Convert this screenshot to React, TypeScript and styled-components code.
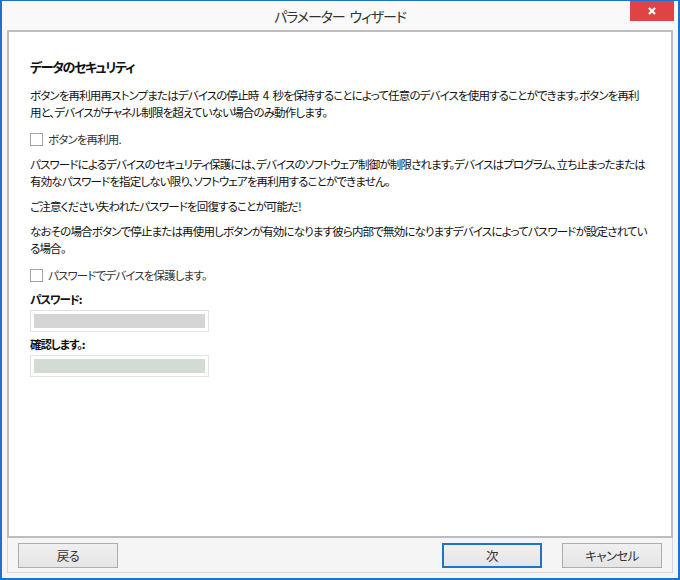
import { FC } from 'react';
import styled, { createGlobalStyle } from 'styled-components';

const GlobalStyle = createGlobalStyle`
  html, body {
    margin: 0;
    padding: 0;
    background: #ffffff;
  }
  * {
    box-sizing: border-box;
  }
`;

const Window = styled.div`
  width: 680px;
  height: 580px;
  display: flex;
  flex-direction: column;
  background-color: #f5f5f5;
  border: 2px solid #1c73c9;
  border-top-width: 1px;
  font-family: 'Noto Sans CJK JP', 'Noto Sans', sans-serif;
  font-feature-settings: 'palt' 1;
  color: #111;
`;

const TitleBar = styled.div`
  position: relative;
  height: 29px;
  display: flex;
  align-items: center;
  justify-content: center;
  background-color: #f9f9f9;
`;

const Title = styled.div`
  font-size: 14px;
  color: #333;
  letter-spacing: -1.1px;
  word-spacing: 3px;
`;

const CloseButton = styled.div`
  position: absolute;
  top: 0;
  right: 4px;
  width: 44px;
  height: 20px;
  display: flex;
  align-items: center;
  justify-content: center;
  background-color: #e04343;
`;

const Body = styled.div`
  flex: 1;
  padding: 0 5px 5px;
  display: flex;
  flex-direction: column;
`;

const Frame = styled.div`
  flex: 1;
  display: flex;
  flex-direction: column;
  border: 1px solid #d6d6d6;
  border-top: none;
`;

const Panel = styled.div`
  flex: 1;
  margin: 0 -1px;
  border: 2px solid #bdbdbd;
  background-color: #ffffff;
  padding: 26px 21px 0;
  display: flex;
  flex-direction: column;
  align-items: flex-start;
`;

const Heading = styled.div`
  font-size: 13px;
  font-weight: 700;
  line-height: 17px;
  letter-spacing: -1.4px;
`;

type TextProps = {
  gap?: number;
};
const Paragraph = styled.div<TextProps>`
  margin-top: ${({ gap }) => gap ?? 8}px;
  font-size: 11.5px;
  line-height: 17px;
  letter-spacing: -0.85px;
  word-spacing: 2.5px;
  white-space: nowrap;
`;

const CheckRow = styled.label<TextProps>`
  margin-top: ${({ gap }) => gap ?? 10}px;
  display: flex;
  align-items: center;
  gap: 5px;
  font-size: 11.5px;
  line-height: 17px;
  letter-spacing: -0.85px;
  color: #333;
`;

const Box = styled.span`
  width: 13px;
  height: 13px;
  border: 1px solid #a3a3a3;
  background-color: #fff;
`;

const FieldLabel = styled.div<TextProps>`
  margin-top: ${({ gap }) => gap ?? 7}px;
  font-size: 11.5px;
  font-weight: 700;
  line-height: 17px;
  letter-spacing: -1.1px;
`;

type FieldProps = {
  fill: string;
};
const Field = styled.div<FieldProps>`
  margin-top: 2px;
  width: 179px;
  height: 22px;
  padding: 3px;
  border: 1px solid #e3e3e3;
  background-color: #fff;

  &::after {
    display: block;
    height: 100%;
    background-color: ${({ fill }) => fill};
    content: '';
  }
`;

const Footer = styled.div`
  display: flex;
  align-items: center;
  padding: 5px 10px 4px;
`;

const Spacer = styled.div`
  flex: 1;
`;

type ButtonProps = {
  primary?: boolean;
};
const Button = styled.button<ButtonProps>`
  width: 100px;
  height: 25px;
  margin-left: ${({ primary }) => (primary ? 0 : 20)}px;
  border: ${({ primary }) => (primary ? '2px solid #1f74c8' : '1px solid #adadad')};
  background: linear-gradient(#f0f0f0, #e5e5e5);
  font-family: inherit;
  font-feature-settings: 'palt' 1;
  font-size: 12.5px;
  letter-spacing: -0.6px;
  color: #333;
  padding: 0;

  &:first-child {
    margin-left: 0;
  }
`;

const App: FC = () => (
  <>
    <GlobalStyle />
    <Window>
      <TitleBar>
        <Title>パラメーター ウィザード</Title>
        <CloseButton>
          <svg width="8" height="8" viewBox="0 0 8 8">
            <path d="M1 1 L7 7 M7 1 L1 7" stroke="#fff" strokeWidth="2.2" />
          </svg>
        </CloseButton>
      </TitleBar>
      <Body>
        <Frame>
          <Panel>
            <Heading>データのセキュリティ</Heading>
            <Paragraph gap={12}>
              ボタンを再利用再ストンプまたはデバイスの停止時 4 秒を保持することによって任意のデバイスを使用することができます。ボタンを再利
              <br />
              用と、デバイスがチャネル制限を超えていない場合のみ動作します。
            </Paragraph>
            <CheckRow>
              <Box />
              ボタンを再利用.
            </CheckRow>
            <Paragraph>
              パスワードによるデバイスのセキュリティ保護には、デバイスのソフトウェア制御が制限されます。デバイスはプログラム、立ち止まったまたは
              <br />
              有効なパスワードを指定しない限り、ソフトウェアを再利用することができません。
            </Paragraph>
            <Paragraph>ご注意ください失われたパスワードを回復することが可能だ!</Paragraph>
            <Paragraph>
              なおその場合ボタンで停止または再使用しボタンが有効になります彼ら内部で無効になりますデバイスによってパスワードが設定されてい
              <br />
              る場合。
            </Paragraph>
            <CheckRow>
              <Box />
              パスワードでデバイスを保護します。
            </CheckRow>
            <FieldLabel>パスワード:</FieldLabel>
            <Field fill="#d6d4d4" />
            <FieldLabel gap={4}>確認します。:</FieldLabel>
            <Field fill="#d3dbd5" />
          </Panel>
          <Footer>
            <Button>戻る</Button>
            <Spacer />
            <Button primary>次</Button>
            <Button>キャンセル</Button>
          </Footer>
        </Frame>
      </Body>
    </Window>
  </>
);

export default App;
